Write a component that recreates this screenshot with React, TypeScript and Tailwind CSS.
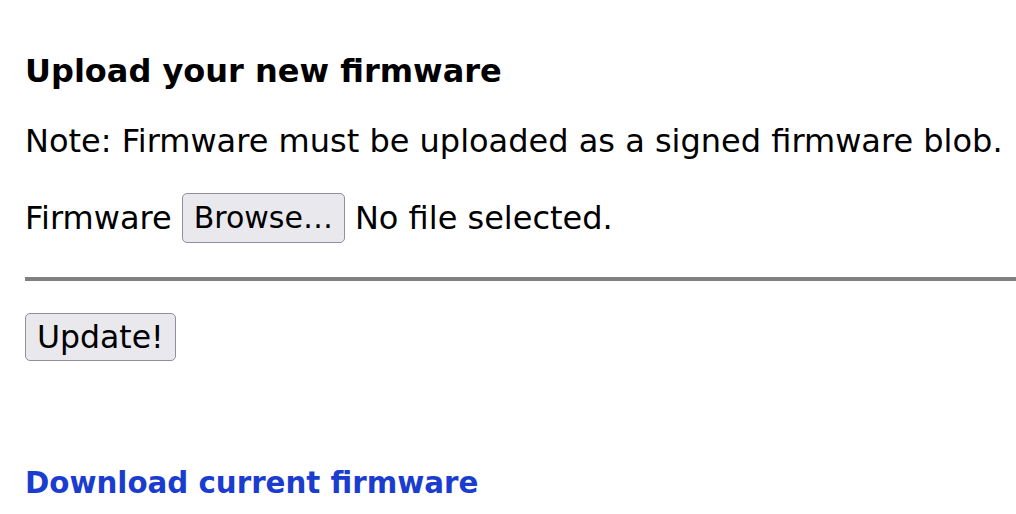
export default function App() {
  return (
    <div className="min-h-screen overflow-hidden bg-white px-[25px] pt-[52px] text-[32px] leading-[38px] text-black" style={{ fontFamily: '"DejaVu Sans", sans-serif' }}>
      <h2 className="font-bold">Upload your new firmware</h2>
      <p className="mt-[32px] whitespace-nowrap">Note: Firmware must be uploaded as a signed firmware blob.</p>
      <div className="mt-[33px] flex items-center gap-[10px] whitespace-nowrap">
        <span>Firmware</span>
        <button className="h-[50px] rounded-[5px] border border-[#8f8f9d] bg-[#e9e9ed] px-[11px] text-[30px]">Browse…</button>
        <span>No file selected.</span>
      </div>
      <hr className="-mr-[25px] mt-[34px] border-t-[4px] border-[#808080]" />
      <button className="mt-[32px] h-[48px] rounded-[5px] border border-[#8f8f9d] bg-[#e9e9ed] px-[11px] text-[31.5px]">Update!</button>
      <div className="mt-[102px]">
        <a href="#" className="text-[29.3px] font-bold text-[#1a3ccf]">Download current firmware</a>
      </div>
    </div>
  );
}
